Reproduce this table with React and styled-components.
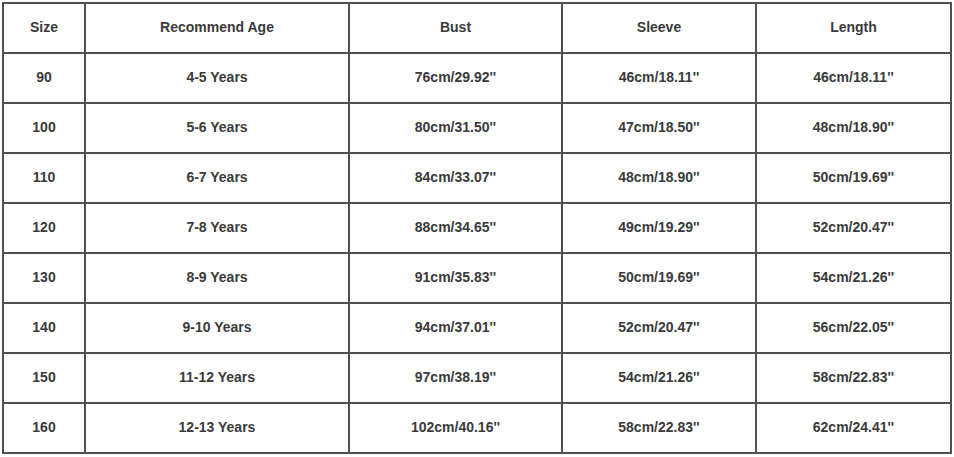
import React from "react";
import styled, { createGlobalStyle } from "styled-components";

const Global = createGlobalStyle`
  html, body { margin: 0; padding: 0; background: #ffffff; }
  body { font-family: "Liberation Sans", Arial, sans-serif; }
`;

const Page = styled.div`
  padding: 2px 0 0 2px;
`;

const Table = styled.table`
  border-collapse: collapse;
  table-layout: fixed;
  width: 950px;
`;

const Row = styled.tr`
  height: 50px;
`;

const Cell = styled.td`
  height: 50px;
  padding: 0 0 2px 0;
  border: 2px solid #4f4f4f;
  text-align: center;
  vertical-align: middle;
  font-family: "Liberation Sans", Arial, sans-serif;
  font-size: 14px;
  font-weight: 700;
  color: #3a3a3a;
  box-sizing: border-box;
`;

const Col = styled.col`
  width: ${(p) => p.$w}px;
`;

const widths = [82, 264, 213, 194, 195];

const header = ["Size", "Recommend Age", "Bust", "Sleeve", "Length"];

const rows = [
  ["90", "4-5 Years", "76cm/29.92''", "46cm/18.11''", "46cm/18.11''"],
  ["100", "5-6 Years", "80cm/31.50''", "47cm/18.50''", "48cm/18.90''"],
  ["110", "6-7 Years", "84cm/33.07''", "48cm/18.90''", "50cm/19.69''"],
  ["120", "7-8 Years", "88cm/34.65''", "49cm/19.29''", "52cm/20.47''"],
  ["130", "8-9 Years", "91cm/35.83''", "50cm/19.69''", "54cm/21.26''"],
  ["140", "9-10 Years", "94cm/37.01''", "52cm/20.47''", "56cm/22.05''"],
  ["150", "11-12 Years", "97cm/38.19''", "54cm/21.26''", "58cm/22.83''"],
  ["160", "12-13 Years", "102cm/40.16''", "58cm/22.83''", "62cm/24.41''"],
];

export default function App() {
  return (
    <>
      <Global />
      <Page>
        <Table>
          <colgroup>
            {widths.map((w, i) => (
              <Col key={i} $w={w} />
            ))}
          </colgroup>
          <tbody>
            <Row>
              {header.map((h) => (
                <Cell key={h}>{h}</Cell>
              ))}
            </Row>
            {rows.map((r) => (
              <Row key={r[0]}>
                {r.map((c, i) => (
                  <Cell key={i}>{c}</Cell>
                ))}
              </Row>
            ))}
          </tbody>
        </Table>
      </Page>
    </>
  );
}
